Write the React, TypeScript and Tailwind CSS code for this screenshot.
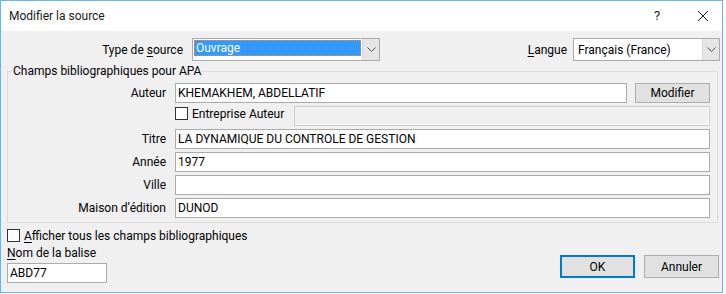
import React from "react";

function Chevron() {
  return (
    <svg width="9" height="5" viewBox="0 0 9 5" className="block">
      <path d="M0.5 0.5 L4.5 4.5 L8.5 0.5" fill="none" stroke="#555" strokeWidth="1" />
    </svg>
  );
}

function CheckBox() {
  return <div className="w-[13px] h-[13px] border border-[#333] bg-white shrink-0" />;
}

function TextInput({ value, className = "" }: { value?: string; className?: string }) {
  return (
    <div className={`h-[20px] border border-[#ababab] bg-white flex items-center pl-[2px] text-[12px] leading-[16px] text-black ${className}`}>
      {value}
    </div>
  );
}

function FieldRow({ label, value }: { label: string; value?: string }) {
  return (
    <div className="flex h-[20px] items-center">
      <div className="w-[158px] shrink-0 text-right">{label}</div>
      <TextInput value={value} className="ml-[9px] flex-1" />
    </div>
  );
}

export default function App() {
  return (
    <div className="w-[726px] h-[294px] bg-white font-['Roboto',sans-serif] text-[12px] leading-[16px] text-black">
      <div className="w-[723px] h-[293px] border border-[#6ab4ec] flex flex-col">
        {/* Title bar */}
        <div className="h-[30px] bg-white flex items-center shrink-0">
          <div className="pl-[8px] text-[12px] text-[#1a1a1a]">Modifier la source</div>
          <div className="ml-auto w-[46px] h-full flex items-center justify-center text-[13px] text-[#222]">?</div>
          <div className="ml-[4px] w-[38px] h-full flex items-center justify-center">
            <svg width="10" height="10" viewBox="0 0 10 10">
              <path d="M0 0 L10 10 M10 0 L0 10" stroke="#222" strokeWidth="1" fill="none" />
            </svg>
          </div>
        </div>

        {/* Body */}
        <div className="flex-1 bg-[#f0f0f0] flex flex-col">
          {/* Row 1 */}
          <div className="mt-[7px] h-[23px] flex items-center">
            <div className="w-[182px] shrink-0 text-right">
              Type de <u className="underline underline-offset-2">s</u>ource
            </div>
            <div className="ml-[9px] w-[188px] shrink-0 h-[23px] border border-[#ababab] bg-white flex">
              <div className="mt-[1px] ml-[1px] h-[16px] flex-1 bg-[#3399ff] border border-dotted border-[#e0902c] text-white flex items-center pl-[1px]">
                Ouvrage
              </div>
              <div className="ml-[1px] w-[17px] h-full bg-[#e5e5e5] border-l border-[#d9d9d9] flex items-center justify-center">
                <Chevron />
              </div>
            </div>
            <div className="flex-1" />
            <div className="mr-[6px]">
              <u className="underline underline-offset-2">L</u>angue
            </div>
            <div className="mr-[2px] w-[147px] shrink-0 h-[23px] border border-[#ababab] bg-white flex">
              <div className="flex-1 flex items-center pl-[4px]">Français (France)</div>
              <div className="w-[17px] h-full bg-[#e5e5e5] border-l border-[#d9d9d9] flex items-center justify-center">
                <Chevron />
              </div>
            </div>
          </div>

          {/* Group box */}
          <fieldset className="mt-[2px] ml-[6px] mr-[4px] border border-[#dcdcdc] pb-[4px] pr-[7px]">
            <legend className="ml-[4px] px-[1px] leading-[16px]">Champs bibliographiques pour APA</legend>
            <div className="pt-[4px] flex flex-col gap-[3px]">
              <div className="flex h-[20px] items-center">
                <div className="w-[158px] shrink-0 text-right">Auteur</div>
                <TextInput value="KHEMAKHEM, ABDELLATIF" className="ml-[9px] flex-1" />
                <div className="ml-[8px] w-[75px] shrink-0 h-[20px] bg-[#e1e1e1] border border-[#adadad] flex items-center justify-center">
                  Modifier
                </div>
              </div>
              <div className="flex h-[20px] items-start">
                <div className="w-[158px] shrink-0" />
                <div className="ml-[9px] mt-[1px] w-[119px] shrink-0 flex items-center h-[13px]">
                  <CheckBox />
                  <span className="ml-[4px] whitespace-nowrap">Entreprise Auteur</span>
                </div>
                <div className="flex-1 h-[20px] border border-[#cccccc] bg-[#f0f0f0] shadow-[inset_-1px_-1px_0_#fafafa]" />
              </div>
              <FieldRow label="Titre" value="LA DYNAMIQUE DU CONTROLE DE GESTION" />
              <FieldRow label="Année" value="1977" />
              <FieldRow label="Ville" />
              <FieldRow label="Maison d’édition" value="DUNOD" />
            </div>
          </fieldset>

          {/* Bottom */}
          <div className="flex-1 flex items-end justify-between pl-[6px] pr-[3px] pb-[9px]">
            <div className="flex flex-col">
              <div className="mt-[6px] h-[13px] flex items-center">
                <CheckBox />
                <span className="ml-[4px]">
                  <u className="underline underline-offset-2">A</u>fficher tous les champs bibliographiques
                </span>
              </div>
              <div className="mt-[3px] h-[16px]">
                <u className="underline underline-offset-2">N</u>om de la balise
              </div>
              <TextInput value="ABD77" className="mt-[2px] w-[100px]" />
            </div>
            <div className="flex mb-[5px] gap-[9px]">
              <div className="w-[75px] h-[23px] bg-[#e1e1e1] border-2 border-[#0078d7] flex items-center justify-center">OK</div>
              <div className="w-[75px] h-[23px] bg-[#e1e1e1] border border-[#adadad] flex items-center justify-center">Annuler</div>
            </div>
          </div>
        </div>
      </div>
    </div>
  );
}
